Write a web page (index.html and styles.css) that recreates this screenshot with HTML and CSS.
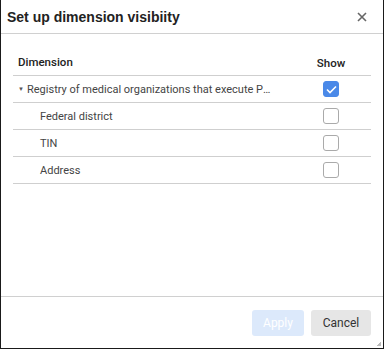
FILE: index.html
```html
<!DOCTYPE html>
<html lang="en">
<head>
    <meta charset="UTF-8">
    <meta name="viewport" content="width=device-width, initial-scale=1.0">
    <title>Set up dimension visibility</title>
    <link rel="stylesheet" href="styles.css">
</head>
<body>
    <div class="dialog">
        <div class="dialog-header">
            <h2>Set up dimension visibiity</h2>
            <button class="close">
                <svg width="10" height="10" viewBox="0 0 10 10"><path d="M1 1L9 9M9 1L1 9" stroke="#666" stroke-width="1.6"/></svg>
            </button>
        </div>
        <div class="dialog-body">
            <div class="row head">
                <div class="name">Dimension</div>
                <div class="show">Show</div>
            </div>
            <div class="row">
                <div class="name"><span class="caret">▼</span>Registry of medical organizations that execute Primary Health Care</div>
                <div class="show"><span class="check checked"><svg width="11" height="9" viewBox="0 0 11 9"><path d="M1 4.5L4 7.5L10 1.5" fill="none" stroke="#fff" stroke-width="1.6"/></svg></span></div>
            </div>
            <div class="row child">
                <div class="name">Federal district</div>
                <div class="show"><span class="check"></span></div>
            </div>
            <div class="row child">
                <div class="name">TIN</div>
                <div class="show"><span class="check"></span></div>
            </div>
            <div class="row child">
                <div class="name">Address</div>
                <div class="show"><span class="check"></span></div>
            </div>
        </div>
        <div class="dialog-footer">
            <button class="btn apply" disabled>Apply</button>
            <button class="btn cancel">Cancel</button>
            <span class="grip"></span>
        </div>
    </div>
</body>
</html>
```
FILE: styles.css
```css
body {
    margin: 0;
    font-family: Roboto, "Liberation Sans", sans-serif;
    color: #444;
}
.dialog {
    width: 384px;
    height: 349px;
    box-sizing: border-box;
    border: 1px solid #1a1a1a;
    border-top: none;
    display: flex;
    flex-direction: column;
    background: #fff;
    position: relative;
}
.dialog-header {
    height: 33px;
    border-bottom: 1px solid #d0d0d0;
    display: flex;
    align-items: center;
    justify-content: space-between;
    padding: 0 16px 0 6px;
}
.dialog-header h2 {
    margin: 0;
    font-family: "Liberation Sans", Arial, sans-serif;
    font-size: 14px;
    font-weight: bold;
    color: #222;
}
.close {
    border: none;
    background: none;
    padding: 0;
    width: 10px;
    height: 10px;
    display: flex;
}
.dialog-body {
    flex: 1;
    padding: 15px 12px 0 12px;
}
.row {
    display: flex;
    align-items: center;
    height: 26px;
    border-bottom: 1px solid #cfcfcf;
    font-size: 11px;
}
.row .name {
    flex: 1;
    min-width: 0;
    white-space: nowrap;
    overflow: hidden;
    text-overflow: ellipsis;
    padding-left: 5px;
    padding-right: 33px;
}
.row .show {
    width: 48px;
    display: flex;
    justify-content: center;
    padding-right: 16px;
}
.row.head {
    font-size: 11.5px;
    font-weight: 500;
    color: #222;
}
.row.head .show {
    padding-top: 1px;
}
.row.child .name {
    padding-left: 27px;
}
.caret {
    font-size: 6px;
    color: #555;
    display: inline-block;
    width: 9px;
    vertical-align: 2px;
}
.check {
    width: 14px;
    height: 14px;
    border: 1px solid #aaa;
    border-radius: 3px;
    display: flex;
    align-items: center;
    justify-content: center;
}
.check.checked {
    background: #4a89e8;
    border-color: #4a89e8;
}
.dialog-footer {
    height: 51px;
    border-top: 1px solid #d0d0d0;
    display: flex;
    align-items: center;
    justify-content: flex-end;
    gap: 7px;
    padding: 0 12px 0 0;
}
.btn {
    height: 26px;
    border: none;
    border-radius: 3px;
    font-family: Roboto, "Liberation Sans", sans-serif;
    font-size: 12px;
    padding: 0 10px;
}
.apply {
    background: #dce9fb;
    color: #fff;
    width: 52px;
}
.cancel {
    background: #e6e6e6;
    color: #333;
    width: 60px;
}
.grip {
    position: absolute;
    right: 2px;
    bottom: 2px;
    width: 4px;
    height: 4px;
    background: linear-gradient(135deg, transparent 50%, #bbb 50%);
}
```
